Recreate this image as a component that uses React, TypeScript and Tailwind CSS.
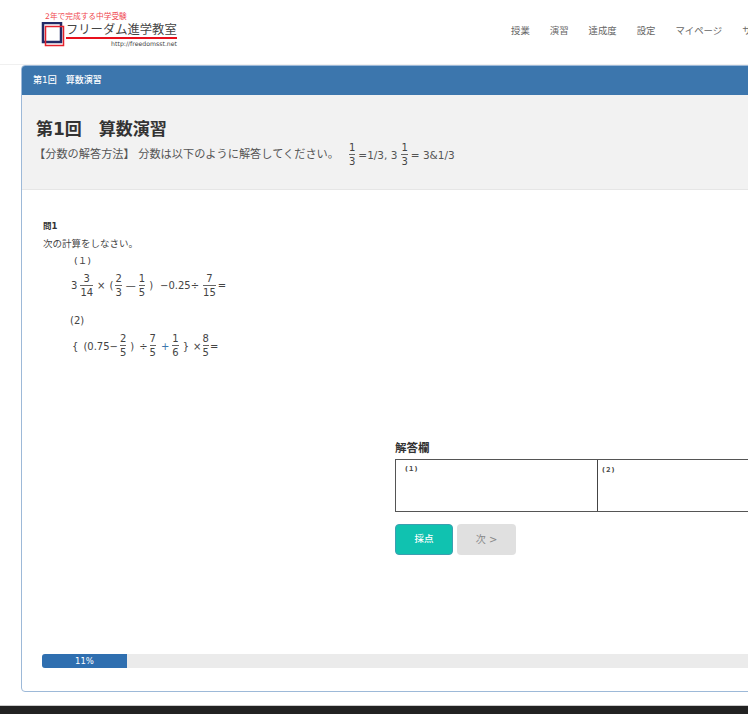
import React from "react";

const jp = { fontFamily: '"DejaVu Sans","Noto Sans CJK JP",sans-serif' };

function Frac({ n, d, className = "" }: { n: string; d: string; className?: string }) {
  return (
    <span className={"inline-flex flex-col items-center shrink-0 text-[10px] leading-[12px] text-[#444] " + className}>
      <span>{n}</span>
      <span className="self-stretch border-t border-[#666] pt-[1px] text-center">{d}</span>
    </span>
  );
}

const nav = ["授業", "演習", "達成度", "設定", "マイページ", "サポート"];

export default function App() {
  return (
    <div className="w-[748px] h-[714px] overflow-hidden bg-white flex flex-col text-[#555]" style={jp}>
      <header className="h-[65px] w-[748px] shrink-0 flex items-start border-b border-[#f0f0f0] overflow-hidden">
        <div className="ml-[41px] mt-[12px] w-[140px] shrink-0 flex flex-col">
          <span className="text-[7.7px] leading-[10px] text-[#f0474f] whitespace-nowrap pl-[4px]">2年で完成する中学受験</span>
          <div className="flex items-start">
            <svg width="25" height="25" viewBox="0 0 25 25" className="shrink-0">
              <rect x="2" y="1" width="18" height="19" fill="none" stroke="#232a66" strokeWidth="2.5" />
              <rect x="4.5" y="4.5" width="18" height="19" fill="none" stroke="#e5222c" strokeWidth="1.5" />
            </svg>
            <div className="flex flex-col">
              <span className="text-[12.3px] leading-[14px] mt-[1px] text-[#444] whitespace-nowrap">フリーダム進学教室</span>
              <span className="h-[2px] w-[111px] bg-[#e8101c]" />
              <span className="text-[6.2px] leading-[8px] text-[#444] text-right whitespace-nowrap w-[111px] mt-[1px]">http://freedomsst.net</span>
            </div>
          </div>
        </div>
        <nav className="ml-[330px] mt-[24px] flex gap-[20px] text-[9.4px] leading-[14px] text-[#666] whitespace-nowrap">
          {nav.map((t) => (
            <span key={t}>{t}</span>
          ))}
        </nav>
      </header>

      <div className="ml-[21px] w-[800px] h-[627px] shrink-0 border border-[#9db9d8] rounded-[4px] flex flex-col overflow-hidden">
        <div className="h-[29px] shrink-0 bg-[#3c76ad] text-white text-[9px] leading-[29px] font-medium pl-[11px]">第1回　算数演習</div>
        <div className="h-[95px] shrink-0 bg-[#f2f2f2] border-b border-[#e6e6e6] pl-[14px] pt-[24px]">
          <h1 className="text-[17px] leading-[20px] font-bold text-[#333]">第1回　算数演習</h1>
          <div className="flex items-center text-[11.2px] leading-[14px] text-[#555] mt-[4px] h-[24px] -ml-[1px] whitespace-nowrap">
            <span className="-ml-[1px]">【分数の解答方法】 分数は以下のように解答してください。</span>
            <Frac n="1" d="3" className="ml-[10px]" />
            <span className="ml-[3px] text-[10.5px]">=1/3, 3</span>
            <Frac n="1" d="3" className="ml-[4px]" />
            <span className="ml-[3px] text-[10.5px]">= 3&amp;1/3</span>
          </div>
        </div>

        <div className="flex-1 flex flex-col min-h-0">
          <div className="pl-[21px] pt-[30px] h-[251px] shrink-0 text-[#333]">
            <div className="text-[8.5px] leading-[12px] font-bold">問1</div>
            <div className="text-[9.5px] leading-[14px] mt-[5px] text-[#444]">次の計算をしなさい。</div>
            <div className="text-[9.5px] leading-[14px] ml-[31px] mt-[3px] text-[#444]">(１)</div>
            <div className="flex items-center ml-[28px] mt-[2px] h-[31px] text-[10px] text-[#444] whitespace-nowrap">
              <span>3</span>
              <Frac n="3" d="14" className="ml-[3px]" />
              <span className="ml-[4px]">×</span>
              <span className="ml-[4px]">(</span>
              <Frac n="2" d="3" className="ml-[2px]" />
              <span className="ml-[4px]">—</span>
              <Frac n="1" d="5" className="ml-[3px]" />
              <span className="ml-[4px]">)</span>
              <span className="ml-[7px]">−0.25÷</span>
              <Frac n="7" d="15" className="ml-[4px]" />
              <span className="ml-[2px]">=</span>
            </div>
            <div className="text-[10px] leading-[14px] ml-[27px] mt-[13px] text-[#444]">(2)</div>
            <div className="flex items-center ml-[29px] mt-[2px] h-[32px] text-[10px] text-[#444] whitespace-nowrap">
              <span>{"{"}</span>
              <span className="ml-[5px]">(0.75−</span>
              <Frac n="2" d="5" className="ml-[2px]" />
              <span className="ml-[4px]">)</span>
              <span className="ml-[5px]">÷</span>
              <Frac n="7" d="5" className="ml-[2px]" />
              <span className="ml-[5px] text-[#3c76ad]">+</span>
              <Frac n="1" d="6" className="ml-[3px]" />
              <span className="ml-[4px]">{"}"}</span>
              <span className="ml-[4px]">×</span>
              <Frac n="8" d="5" className="ml-[1px]" />
              <span className="ml-[1px]">=</span>
            </div>
          </div>

          <div className="ml-[373px] flex flex-col">
            <div className="text-[11.5px] leading-[14px] font-bold text-[#333]">解答欄</div>
            <div className="mt-[4px] h-[53px] w-[500px] border border-[#555] flex text-[6.5px] leading-[10px] font-bold text-[#444]">
              <div className="w-[202px] shrink-0 border-r border-[#444] pt-[4px] pl-[9px]">(１)</div>
              <div className="flex-1 pt-[5px] pl-[4px]">(２)</div>
            </div>
            <div className="mt-[12px] flex gap-[4px]">
              <button className="w-[58px] h-[31px] rounded-[4px] bg-[#10c2b0] border border-[#3c9fb0] text-white text-[9.5px] font-medium">採点</button>
              <button className="w-[59px] h-[31px] rounded-[4px] bg-[#e0e0e0] text-[#888] text-[10px]">次 &gt;</button>
            </div>
          </div>

          <div className="mt-[99px] ml-[20px] h-[14px] w-[780px] bg-[#ebebeb] rounded-l-[3px] overflow-hidden">
            <div className="h-full w-[85px] bg-[#2f6fb0] text-white text-[8.5px] leading-[14px] text-center">11%</div>
          </div>
        </div>
      </div>

      <div className="mt-[13px] flex-1 bg-[#222] border-t border-[#ccc]" />
    </div>
  );
}
